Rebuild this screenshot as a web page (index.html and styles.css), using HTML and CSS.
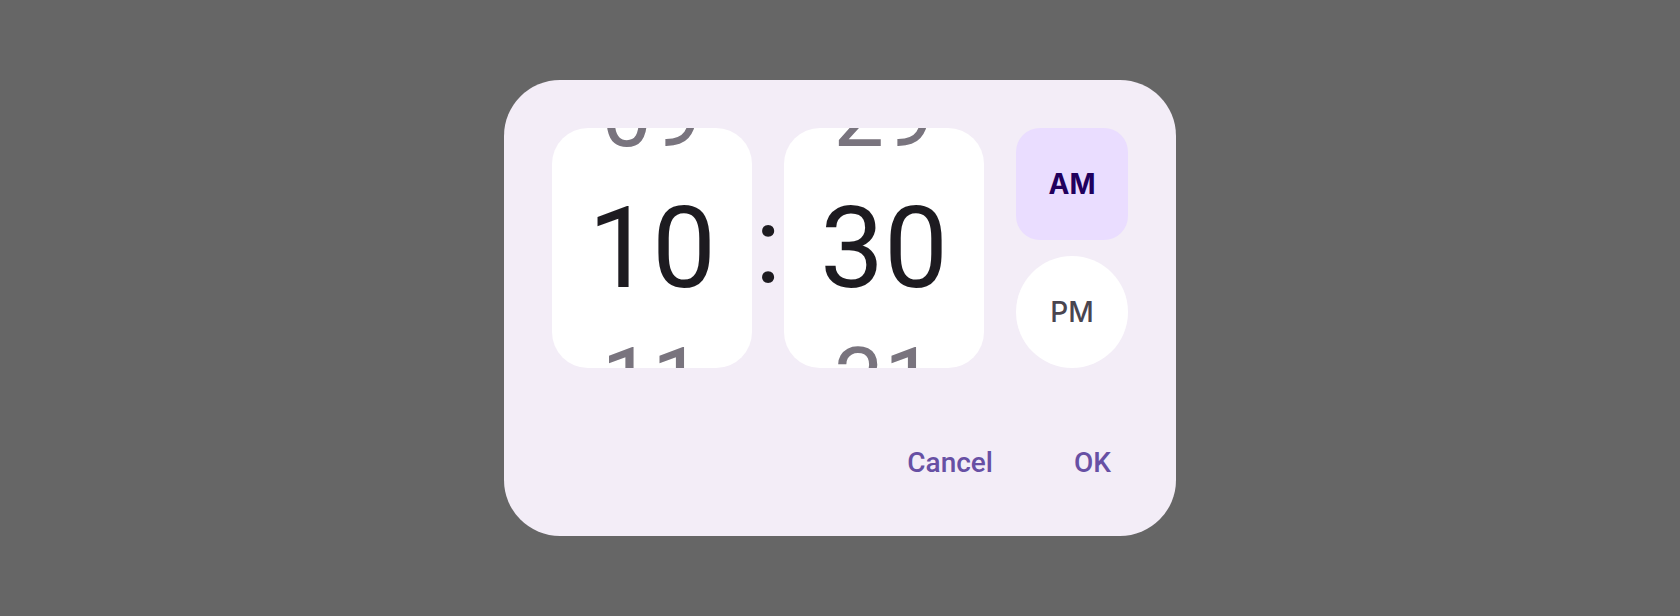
FILE: index.html
```html
<!DOCTYPE html>
<html lang="en">
<head>
<meta charset="utf-8">
<title>Time picker</title>
<link rel="stylesheet" href="styles.css">
</head>
<body>
<div class="scrim">
  <div class="dialog" role="dialog" aria-label="Select time">
    <div class="picker">
      <div class="wheel">
        <div class="item peek">09</div>
        <div class="item current">10</div>
        <div class="item peek">11</div>
      </div>
      <div class="colon">:</div>
      <div class="wheel">
        <div class="item peek">29</div>
        <div class="item current">30</div>
        <div class="item peek">31</div>
      </div>
      <div class="period">
        <button class="period-btn am selected">AM</button>
        <button class="period-btn pm">PM</button>
      </div>
    </div>
    <div class="actions">
      <button class="text-btn">Cancel</button>
      <button class="text-btn">OK</button>
    </div>
  </div>
</div>
</body>
</html>
```
FILE: styles.css
```css
html, body {
  margin: 0;
  padding: 0;
}
body {
  width: 1680px;
  height: 616px;
  background: #666666;
  font-family: Roboto, "Liberation Sans", sans-serif;
  overflow: hidden;
}
.scrim {
  width: 100%;
  height: 100%;
  display: flex;
  align-items: center;
  justify-content: center;
}
.dialog {
  width: 672px;
  height: 456px;
  box-sizing: border-box;
  background: #F3EDF7;
  border-radius: 56px;
  padding: 48px 41px 0 48px;
  display: flex;
  flex-direction: column;
}
.picker {
  display: flex;
  align-items: flex-start;
}
.wheel {
  width: 200px;
  height: 240px;
  background: #FFFFFF;
  border-radius: 36px;
  overflow: hidden;
  display: flex;
  flex-direction: column;
  justify-content: center;
  align-items: center;
}
.item {
  flex-shrink: 0;
  height: 133px;
  line-height: 133px;
  text-align: center;
  white-space: nowrap;
}
.item.current {
  font-size: 114px;
  color: #1D1B20;
}
.item.peek {
  font-size: 90px;
  color: #79747E;
}
.colon {
  width: 32px;
  height: 240px;
  display: flex;
  align-items: center;
  justify-content: center;
  font-size: 108px;
  line-height: 1;
  color: #1D1B20;
  padding-bottom: 6px;
  box-sizing: border-box;
}
.period {
  margin-left: 32px;
  display: flex;
  flex-direction: column;
  gap: 16px;
}
.period-btn {
  width: 112px;
  height: 112px;
  border: none;
  padding: 0;
  font-family: Inter, "Noto Sans", sans-serif;
  font-size: 28px;
  display: flex;
  align-items: center;
  justify-content: center;
}
.period-btn.am {
  border-radius: 24px;
  background: #EADDFF;
  color: #21005D;
  font-weight: 700;
}
.period-btn.pm {
  border-radius: 50%;
  background: #FFFFFF;
  color: #49454F;
  font-weight: 500;
}
.actions {
  margin-top: 55px;
  display: flex;
  justify-content: flex-end;
  gap: 33px;
}
.text-btn {
  height: 80px;
  padding: 0 24px;
  border: none;
  background: transparent;
  font-family: Roboto, "Liberation Sans", sans-serif;
  font-size: 28px;
  font-weight: 500;
  line-height: 80px;
  color: #6750A4;
}
```
